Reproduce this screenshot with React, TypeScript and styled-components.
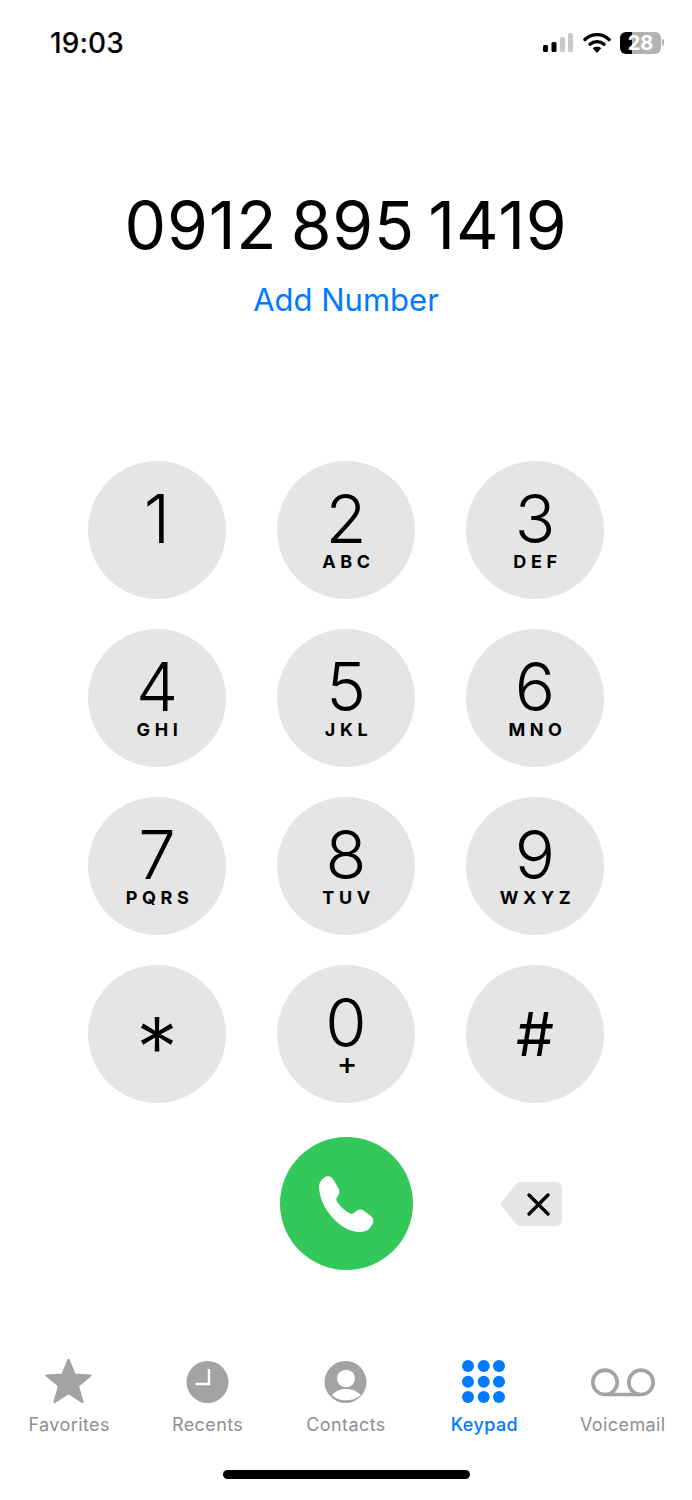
import styled, { createGlobalStyle } from "styled-components";

const GlobalStyle = createGlobalStyle`
  html, body {
    margin: 0;
    padding: 0;
    background: #fff;
  }
  body {
    font-family: Inter, "Liberation Sans", sans-serif;
    color: #000;
  }
`;

interface KeyType {
  digit: string;
  letters?: string;
}

const KEYS: KeyType[] = [
  { digit: "1" },
  { digit: "2", letters: "ABC" },
  { digit: "3", letters: "DEF" },
  { digit: "4", letters: "GHI" },
  { digit: "5", letters: "JKL" },
  { digit: "6", letters: "MNO" },
  { digit: "7", letters: "PQRS" },
  { digit: "8", letters: "TUV" },
  { digit: "9", letters: "WXYZ" },
  { digit: "*" },
  { digit: "0", letters: "+" },
  { digit: "#" },
];

function StarIcon() {
  return (
    <svg width="48" height="46" viewBox="0 0 48 46">
      <path
        d="M23.5 1 L29.5 15.5 L45.5 16.5 L33 27 L37.5 43 L23.5 34 L9.5 43 L14 27 L1.5 16.5 L17.5 15.5 Z"
        fill="#a3a3a3"
        stroke="#a3a3a3"
        strokeWidth="2.2"
        strokeLinejoin="round"
      />
    </svg>
  );
}

function ClockIcon() {
  return (
    <svg width="44" height="44" viewBox="0 0 44 44">
      <circle cx="21.5" cy="22" r="21" fill="#a3a3a3" />
      <path d="M23 9 V24 H9.5" fill="none" stroke="#fff" strokeWidth="2.4" />
    </svg>
  );
}

function ContactIcon() {
  return (
    <svg width="44" height="44" viewBox="0 0 44 44">
      <circle cx="21.5" cy="22" r="21" fill="#a3a3a3" />
      <ellipse cx="22" cy="18.5" rx="9" ry="8.7" fill="#fff" />
      <path d="M8 35 C12 30.5 17 29 22 29 C27 29 32 30.5 37 35 C32 39 27 40.3 22 40.3 C17 40.3 12 39 8 35 Z" fill="#fff" />
    </svg>
  );
}

function KeypadIcon() {
  const spots = [6, 21.7, 37];
  return (
    <svg width="44" height="44" viewBox="0 0 44 44">
      {spots.map((cy) =>
        spots.map((cx) => <circle key={`${cx}-${cy}`} cx={cx} cy={cy} r="6" fill="#007aff" />)
      )}
    </svg>
  );
}

function VoicemailIcon() {
  return (
    <svg width="64" height="44" viewBox="0 0 64 44">
      <path
        d="M14 34.5 H50 M14 34.5 A12.2 12.2 0 1 1 14 10.1 A12.2 12.2 0 1 1 14 34.5 Z M50 34.5 A12.2 12.2 0 1 1 50 10.1 A12.2 12.2 0 1 1 50 34.5 Z"
        fill="none"
        stroke="#a3a3a3"
        strokeWidth="3.6"
      />
    </svg>
  );
}

function PhoneIcon() {
  return (
    <svg width="56" height="56" viewBox="0 0 56 56">
      <path
        d="M1 11 C1 6 5 1.5 9 0.3 C11.5 -0.3 13.5 0.8 15 3 L20.5 12.5 C22 15.5 21.5 17.5 20 19.5 L18.5 22 C18 23.5 18.5 25 19.5 26.5 C23 31 27 35 32 37.5 C33.5 38 35 37.8 36 37 L39 34.5 C41 33 43.5 33 45.5 34.5 L53.5 40.5 C55.5 42.5 56 45 54.5 48 C52 53 48 56 42 56 C32 56 22 50 14 41 C6 32 1.5 21 1 11 Z"
        fill="#fff"
      />
    </svg>
  );
}

function BackspaceIcon() {
  return (
    <svg width="62" height="44" viewBox="0 0 62 44">
      <path
        d="M19 0 H55 A6 6 0 0 1 61 6 V38 A6 6 0 0 1 55 44 H19 A5 5 0 0 1 15.5 42.5 L1 24.5 A3.5 3.5 0 0 1 1 19.5 L15.5 1.5 A5 5 0 0 1 19 0 Z"
        fill="#e5e5e5"
      />
      <path d="M28 13 L47 32 M47 13 L28 32" stroke="#000" strokeWidth="3.4" strokeLinecap="round" />
    </svg>
  );
}

const TABS = [
  { label: "Favorites", icon: <StarIcon /> },
  { label: "Recents", icon: <ClockIcon /> },
  { label: "Contacts", icon: <ContactIcon /> },
  { label: "Keypad", icon: <KeypadIcon />, active: true },
  { label: "Voicemail", icon: <VoicemailIcon /> },
];

function App() {
  return (
    <Page>
      <GlobalStyle />
      <StatusBar>
        <Time>19:03</Time>
        <StatusIcons>
          <svg width="32" height="20" viewBox="0 0 32 20">
            <rect x="1" y="12" width="5" height="7" rx="1.5" fill="#000" />
            <rect x="9.5" y="9" width="5" height="10" rx="1.5" fill="#000" />
            <rect x="18" y="4" width="5" height="15" rx="1.5" fill="#c9c9c9" />
            <rect x="26" y="0" width="5" height="19" rx="1.5" fill="#c9c9c9" />
          </svg>
          <svg width="28" height="21" viewBox="0 0 28 21">
            <path d="M2 7.5 C9 1 19 1 26 7.5" fill="none" stroke="#000" strokeWidth="3.4" strokeLinecap="round" />
            <path d="M7 12.2 C11 8.7 17 8.7 21 12.2" fill="none" stroke="#000" strokeWidth="3.4" strokeLinecap="round" />
            <path d="M14 21 L9.8 16.2 C12 14.4 16 14.4 18.2 16.2 Z" fill="#000" />
          </svg>
          <Battery>
            <BatteryBody>28</BatteryBody>
            <BatteryNub />
          </Battery>
        </StatusIcons>
      </StatusBar>

      <NumberArea>
        <DialedNumber>0912 895 1419</DialedNumber>
        <AddNumber>Add Number</AddNumber>
      </NumberArea>

      <KeyGrid>
        {KEYS.map((key) => (
          <Key key={key.digit}>
            {key.digit === "*" || key.digit === "#" ? (
              <Symbol $star={key.digit === "*"}>{key.digit}</Symbol>
            ) : (
              <Digit>{key.digit}</Digit>
            )}
            {key.letters === "+" && <Plus>+</Plus>}
            {key.letters && key.letters !== "+" && <Letters>{key.letters}</Letters>}
          </Key>
        ))}
      </KeyGrid>

      <CallRow>
        <span />
        <CallButton>
          <PhoneIcon />
        </CallButton>
        <BackspaceSlot>
          <BackspaceIcon />
        </BackspaceSlot>
      </CallRow>

      <TabBar>
        {TABS.map((tab) => (
          <Tab key={tab.label} $active={tab.active}>
            <TabIcon>{tab.icon}</TabIcon>
            {tab.label}
          </Tab>
        ))}
      </TabBar>

      <HomeIndicator />
    </Page>
  );
}
export default App;

const Page = styled.div`
  display: flex;
  flex-direction: column;
  width: 692px;
  height: 1500px;
  overflow: hidden;
`;

const StatusBar = styled.div`
  display: flex;
  align-items: center;
  justify-content: space-between;
  height: 85px;
  padding: 0 28px 0 50px;
  box-sizing: border-box;
`;

const Time = styled.span`
  font-size: 28px;
  font-weight: 500;
  letter-spacing: 0.1px;
`;

const StatusIcons = styled.div`
  display: flex;
  align-items: center;
  gap: 9px;
`;

const Battery = styled.div`
  display: flex;
  align-items: center;
  gap: 1px;
`;

const BatteryBody = styled.div`
  width: 41px;
  height: 22px;
  border-radius: 6px;
  background: linear-gradient(to right, #000 0 12px, #b3b3b3 12px);
  color: #fff;
  font-size: 20px;
  font-weight: 700;
  line-height: 22px;
  text-align: center;
`;

const BatteryNub = styled.div`
  width: 2px;
  height: 7px;
  border-radius: 0 2px 2px 0;
  background: #b3b3b3;
`;

const NumberArea = styled.div`
  display: flex;
  flex-direction: column;
  align-items: center;
  height: 376px;
  padding-top: 100px;
  box-sizing: border-box;
`;

const DialedNumber = styled.div`
  font-size: 66px;
  font-weight: 400;
  line-height: 80px;
  letter-spacing: 0.8px;
  word-spacing: -6px;
`;

const AddNumber = styled.div`
  margin-top: 15px;
  color: #007aff;
  font-size: 31px;
  line-height: 40px;
`;

const KeyGrid = styled.div`
  display: grid;
  grid-template-columns: repeat(3, 138px);
  justify-content: center;
  column-gap: 51px;
  row-gap: 30px;
`;

const Key = styled.div`
  display: flex;
  flex-direction: column;
  align-items: center;
  width: 138px;
  height: 138px;
  padding-top: 31px;
  box-sizing: border-box;
  border-radius: 50%;
  background: #e5e5e5;
`;

const Digit = styled.div`
  font-size: 67px;
  font-weight: 350;
  line-height: 54px;
`;

const Symbol = styled.div<{ $star?: boolean }>`
  font-size: ${(p) => (p.$star ? "84px" : "60px")};
  font-weight: ${(p) => (p.$star ? 300 : 400)};
  line-height: 54px;
  margin-top: ${(p) => (p.$star ? "25px" : "11px")};
`;

const Letters = styled.div`
  margin-top: 7px;
  padding-left: 5px;
  font-size: 18px;
  font-weight: 650;
  line-height: 18px;
  letter-spacing: 4.6px;
`;

const Plus = styled.div`
  margin-top: 2px;
  padding-left: 2px;
  font-size: 31px;
  font-weight: 500;
  line-height: 22px;
`;

const CallRow = styled.div`
  display: grid;
  grid-template-columns: repeat(3, 138px);
  justify-content: center;
  column-gap: 51px;
  align-items: center;
  margin-top: 34px;
`;

const CallButton = styled.div`
  display: flex;
  align-items: center;
  justify-content: center;
  justify-self: center;
  width: 133px;
  height: 133px;
  border-radius: 50%;
  background: #34c85a;
`;

const BackspaceSlot = styled.div`
  display: flex;
  justify-content: center;
  padding-right: 7px;
  line-height: 0;
`;

const TabBar = styled.div`
  display: grid;
  grid-template-columns: repeat(5, 1fr);
  margin-top: 88px;
`;

const Tab = styled.div<{ $active?: boolean }>`
  display: flex;
  flex-direction: column;
  align-items: center;
  color: ${(p) => (p.$active ? "#007aff" : "#8e8e93")};
  font-size: 18px;
  font-weight: ${(p) => (p.$active ? 500 : 400)};
  line-height: 24px;
  letter-spacing: 0.4px;
`;

const TabIcon = styled.div`
  display: flex;
  align-items: center;
  justify-content: center;
  height: 48px;
  margin-bottom: 7px;
`;

const HomeIndicator = styled.div`
  align-self: center;
  width: 247px;
  height: 9px;
  margin-top: 33px;
  border-radius: 5px;
  background: #000;
`;
